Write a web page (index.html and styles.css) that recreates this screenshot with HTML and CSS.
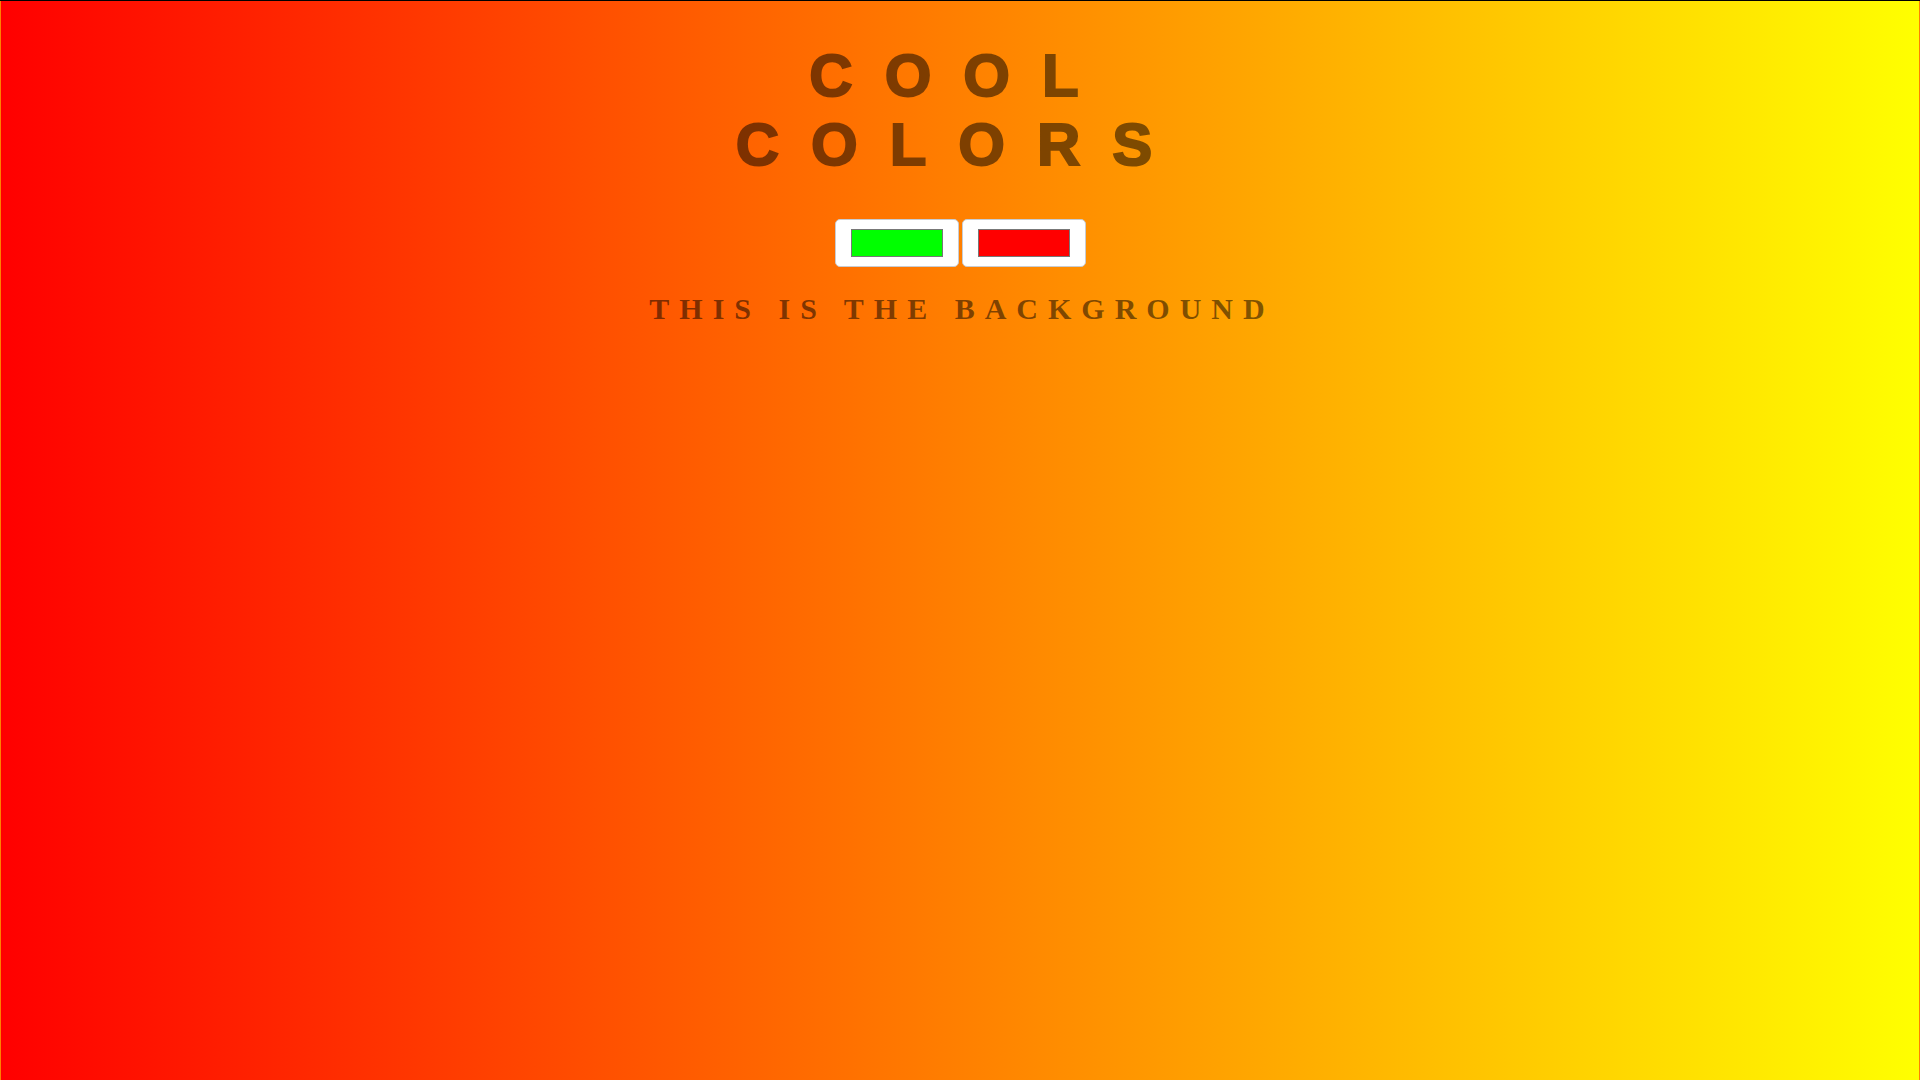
FILE: index.html
```html
<!DOCTYPE html>
<html lang="en">
<head>
<meta charset="utf-8">
<title>Cool Colors</title>
<link rel="stylesheet" href="styles.css">
</head>
<body>
<main class="page">
  <h1 class="title">COOL<br>COLORS</h1>
  <div class="pickers">
    <div class="picker"><span class="swatch swatch-green"></span></div>
    <div class="picker"><span class="swatch swatch-red"></span></div>
  </div>
  <h2 class="subtitle">THIS IS THE BACKGROUND</h2>
</main>
</body>
</html>
```
FILE: styles.css
```css
html {
  margin: 0;
  border-top: 1px solid #000;
  background: #ff8000;
}
body {
  margin: 0 1px;
  min-height: 1079px;
  background: linear-gradient(to right, #ff0000, #ffff00);
}
.page {
  display: flex;
  flex-direction: column;
  align-items: center;
}
.title {
  margin: 40px 0;
  font-family: "Liberation Sans", Arial, sans-serif;
  font-weight: 700;
  font-size: 60px;
  line-height: 69px;
  letter-spacing: 32px;
  text-align: center;
  color: #000;
  -webkit-text-stroke: 2px #000;
  opacity: 0.5;
}
.pickers {
  display: flex;
  gap: 3px;
}
.picker {
  box-sizing: border-box;
  width: 124px;
  height: 48px;
  padding: 9px 15px;
  background: #fff;
  border: 1px solid #c8ccd2;
  border-radius: 5px;
  display: flex;
}
.swatch {
  flex: 1;
  border: 1px solid #777;
}
.swatch-green { background: #00ff00; }
.swatch-red { background: #ff0000; }
.subtitle {
  margin: 25px 0 0 4px;
  font-family: "Liberation Serif", "Times New Roman", serif;
  font-weight: 700;
  font-size: 30px;
  line-height: 34px;
  letter-spacing: 10px;
  color: rgba(0, 0, 0, 0.5);
}
```
